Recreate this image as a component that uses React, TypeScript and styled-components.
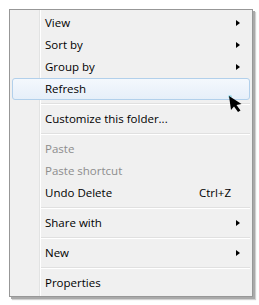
import React from "react";
import styled, { createGlobalStyle } from "styled-components";

const Global = createGlobalStyle`
  html, body { margin: 0; padding: 0; background: #ffffff; }
  body { font-family: "Open Sans", "Noto Sans", sans-serif; }
`;

const Stage = styled.div`
  position: relative;
  width: 259px;
  height: 305px;
  padding: 9px 0 0 9px;
  box-sizing: border-box;
`;

const Menu = styled.div`
  width: 244px;
  box-sizing: border-box;
  border: 1px solid #979797;
  padding: 2px 2px 2px 2px;
  background:
    linear-gradient(
      to right,
      transparent 29px,
      #e2e3e3 29px,
      #e2e3e3 30px,
      #ffffff 30px,
      #ffffff 31px,
      transparent 31px
    ),
    #f0f0f0;
  box-shadow: 2px 2px 0 0 #a9a9a9, 3px 3px 1px 0 rgba(0, 0, 0, 0.18);
  display: flex;
  flex-direction: column;
`;

const Item = styled.div<{ $hover?: boolean; $disabled?: boolean }>`
  height: 22px;
  box-sizing: border-box;
  display: grid;
  grid-template-columns: 1fr auto 18px;
  align-items: center;
  padding-left: 32px;
  border-radius: 3px;
  border: 1px solid ${(p) => (p.$hover ? "#b2d0eb" : "transparent")};
  background: ${(p) =>
    p.$hover ? "linear-gradient(to bottom, #f4f8fd, #e6eff9)" : "transparent"};
  color: ${(p) => (p.$disabled ? "#8d8d8d" : "#000000")};
  font-size: 11.5px;
  line-height: 20px;
`;

const Label = styled.span`
  white-space: nowrap;
`;

const Shortcut = styled.span`
  white-space: nowrap;
  padding-right: 0px;
`;

const Arrow = styled.span`
  justify-self: start;
  margin-left: 5px;
  width: 0;
  height: 0;
  border-top: 3.5px solid transparent;
  border-bottom: 3.5px solid transparent;
  border-left: 4px solid #000;
`;

const Separator = styled.div`
  height: 8px;
  display: flex;
  flex-direction: column;
  justify-content: center;
  margin-left: 29px;
  &::before {
    content: "";
    display: block;
    height: 1px;
    background: #e0e0e0;
  }
  &::after {
    content: "";
    display: block;
    height: 1px;
    background: #ffffff;
  }
`;

const Cursor = styled.svg`
  position: absolute;
  left: 228px;
  top: 95px;
`;

type Entry =
  | { sep: true }
  | {
      sep?: false;
      label: string;
      sub?: boolean;
      shortcut?: string;
      disabled?: boolean;
      hover?: boolean;
    };

const entries: Entry[] = [
  { label: "View", sub: true },
  { label: "Sort by", sub: true },
  { label: "Group by", sub: true },
  { label: "Refresh", hover: true },
  { sep: true },
  { label: "Customize this folder..." },
  { sep: true },
  { label: "Paste", disabled: true },
  { label: "Paste shortcut", disabled: true },
  { label: "Undo Delete", shortcut: "Ctrl+Z" },
  { sep: true },
  { label: "Share with", sub: true },
  { sep: true },
  { label: "New", sub: true },
  { sep: true },
  { label: "Properties" },
];

export default function App() {
  return (
    <>
      <Global />
      <Stage>
        <Menu>
          {entries.map((e, i) =>
            e.sep ? (
              <Separator key={i} />
            ) : (
              <Item key={i} $hover={e.hover} $disabled={e.disabled}>
                <Label>{e.label}</Label>
                <Shortcut>{e.shortcut ?? ""}</Shortcut>
                {e.sub ? <Arrow /> : <span />}
              </Item>
            )
          )}
        </Menu>
        <Cursor width="18" height="20" viewBox="0 0 18 20">
          <ellipse cx="2" cy="1.5" rx="2" ry="1.5" fill="#7fd3e6" opacity="0.7" />
          <polygon
            points="1,1 3,15 6,11.5 10,17 12.5,15.5 8.5,10 13.5,9"
            fill="#000"
          />
        </Cursor>
      </Stage>
    </>
  );
}
